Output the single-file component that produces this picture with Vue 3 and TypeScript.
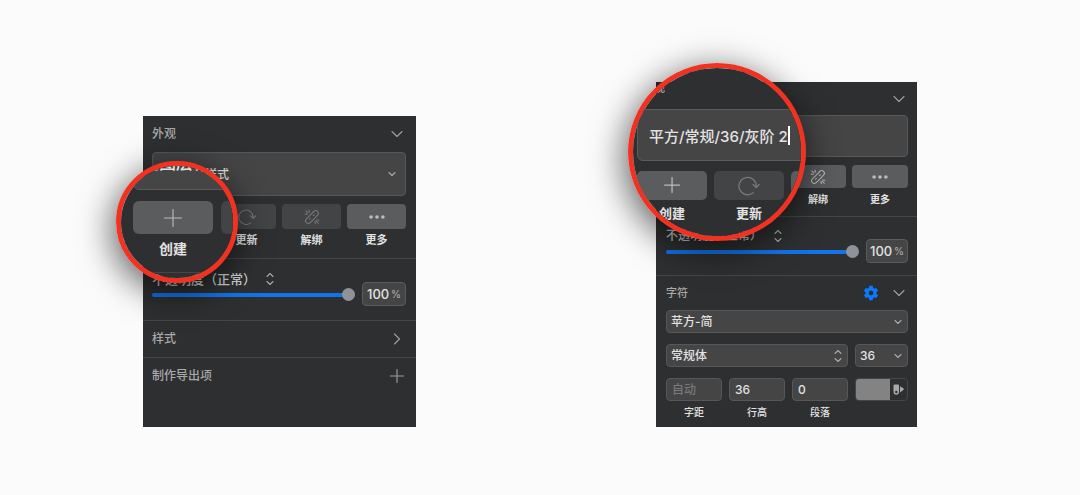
<script setup lang="ts">
import { h, ref } from 'vue'

type IconName =
  | 'chevron' | 'caret' | 'right' | 'updown' | 'plus' | 'bigPlus' | 'refresh' | 'unlink' | 'more' | 'gear' | 'swatch'

interface IconDef {
  box: string
  width: number
  height: number
  d: string
  fill?: boolean
}

const icons: Record<IconName, IconDef> = {
  chevron: { box: '0 0 12 8', width: 12, height: 8, d: 'M1 1.5 6 6.5 11 1.5' },
  caret: { box: '0 0 8 6', width: 8, height: 6, d: 'M1 1.5 4 4.5 7 1.5' },
  right: { box: '0 0 8 12', width: 8, height: 12, d: 'M1.5 1 6.5 6 1.5 11' },
  updown: { box: '0 0 8 14', width: 8, height: 14, d: 'M1 4.5 4 1.5 7 4.5M1 9.5 4 12.5 7 9.5' },
  plus: { box: '0 0 14 14', width: 14, height: 14, d: 'M7 .5V13.5M.5 7H13.5' },
  bigPlus: { box: '0 0 18 18', width: 18, height: 18, d: 'M9 .5V17.5M.5 9H17.5' },
  refresh: { box: '0 0 18 18', width: 18, height: 18, d: 'M12.6 14.8A7.2 7.2 0 1 1 15.2 9.6M12.6 7.9 15.2 10.4 17.6 7.9' },
  unlink: {
    box: '0 0 16 16', width: 16, height: 16,
    d: 'M6 6.4 9.8 2.5A2.6 2.6 0 0 1 13.6 6.2L9.8 10.1M10.2 5.9 9.6 6.5M6.2 9.5 5.6 10.1M9.6 10.3 6.2 13.7A2.6 2.6 0 0 1 2.4 9.9L6 6.4M1 5 3.2 5.4M1.9 1.9 3.9 3.9M5 1 5.4 3.2M11 12.4 11.3 14.8M12.4 12.4 14.2 14.2M12.6 11 15 11.3',
  },
  more: { box: '0 0 16 4', width: 16, height: 4, fill: true, d: 'M.3 2a1.8 1.8 0 1 0 3.6 0 1.8 1.8 0 1 0-3.6 0M6.2 2a1.8 1.8 0 1 0 3.6 0 1.8 1.8 0 1 0-3.6 0M12.1 2a1.8 1.8 0 1 0 3.6 0 1.8 1.8 0 1 0-3.6 0' },
  gear: {
    box: '0 0 24 24', width: 18, height: 18, fill: true,
    d: 'M19.14 12.94c.04-.3.06-.61.06-.94 0-.32-.02-.64-.07-.94l2.03-1.58a.49.49 0 0 0 .12-.61l-1.92-3.32a.49.49 0 0 0-.59-.22l-2.39.96c-.5-.38-1.03-.7-1.62-.94l-.36-2.54a.48.48 0 0 0-.48-.41h-3.84a.48.48 0 0 0-.47.41l-.36 2.54c-.59.24-1.13.57-1.62.94l-2.39-.96a.48.48 0 0 0-.59.22L2.74 8.87a.48.48 0 0 0 .12.61l2.03 1.58c-.05.3-.09.63-.09.94s.02.64.07.94l-2.03 1.58a.49.49 0 0 0-.12.61l1.92 3.32c.12.22.37.29.59.22l2.39-.96c.5.38 1.03.7 1.62.94l.36 2.54c.05.24.24.41.48.41h3.84c.24 0 .44-.17.47-.41l.36-2.54c.59-.24 1.13-.56 1.62-.94l2.39.96c.22.08.47 0 .59-.22l1.92-3.32a.48.48 0 0 0-.12-.61zM12 15.2a3.2 3.2 0 1 1 0-6.4 3.2 3.2 0 0 1 0 6.4',
  },
  swatch: {
    box: '0 0 12 11', width: 12, height: 11, fill: true,
    d: 'M1.5 .5H5a1 1 0 0 1 1 1V8A2.7 2.7 0 0 1 .5 8V1.5a1 1 0 0 1 1-1M2.1 8a1.2 1.2 0 1 0 2.4 0 1.2 1.2 0 1 0-2.4 0M7 2.2 10.6 4.6a.8.8 0 0 1 0 1.2L7 8.6z',
  },
}

const Icon = (props: { name: IconName; scale?: number }) => {
  const def = icons[props.name]
  const scale = props.scale ?? 1
  return h(
    'svg',
    { viewBox: def.box, width: def.width * scale, height: def.height * scale, 'aria-hidden': 'true' },
    [
      h('path', {
        d: def.d,
        fill: def.fill ? 'currentColor' : 'none',
        'fill-rule': 'evenodd',
        stroke: def.fill ? 'none' : 'currentColor',
        'stroke-width': 1.1,
        'stroke-linecap': 'round',
        'stroke-linejoin': 'round',
      }),
    ],
  )
}
Icon.props = ['name', 'scale']

interface Action {
  label: string
  icon: IconName
  off: boolean
}

const layerActions: Action[] = [
  { label: '创建', icon: 'plus', off: false },
  { label: '更新', icon: 'refresh', off: true },
  { label: '解绑', icon: 'unlink', off: true },
  { label: '更多', icon: 'more', off: false },
]
const textActions: Action[] = layerActions.map((a) => (a.icon === 'unlink' ? { ...a, off: false } : a))

const styleName = ref('平方/常规/36/灰阶 2')
const layerOpacity = ref(100)
const textOpacity = ref(100)
const metrics = [
  { id: 'kern', label: '字距', value: '', hint: '自动' },
  { id: 'line', label: '行高', value: '36', hint: '' },
  { id: 'para', label: '段落', value: '0', hint: '' },
]
</script>

<template>
  <main class="stage">
    <section class="panel layer">
      <header class="head">
        <h2>外观</h2>
        <button class="bare" aria-label="折叠外观"><Icon name="chevron" /></button>
      </header>
      <div class="inset">
        <div class="pick tall">
          <select aria-label="图层样式"><option>无图层样式</option></select>
          <Icon name="caret" />
        </div>
        <div class="actions">
          <label v-for="a in layerActions" :key="a.label">
            <button :class="{ off: a.off }"><Icon :name="a.icon" /></button>
            <span>{{ a.label }}</span>
          </label>
        </div>
      </div>
      <div class="opacity">
        <div class="level">
          <label for="layer-opacity">不透明度（正常）</label>
          <button class="bare" aria-label="混合模式"><Icon name="updown" /></button>
          <input id="layer-opacity" v-model="layerOpacity" type="range" min="0" max="100" />
        </div>
        <label class="percent"><input v-model="layerOpacity" aria-label="不透明度" /><span>%</span></label>
      </div>
      <div class="head ruled">
        <h2>样式</h2>
        <button class="bare" aria-label="展开样式"><Icon name="right" /></button>
      </div>
      <div class="head ruled">
        <h2>制作导出项</h2>
        <button class="bare" aria-label="添加导出项"><Icon name="plus" /></button>
      </div>

      <div class="lens small">
        <div class="glass">
          <div class="field">无图层样式</div>
          <div class="actions">
            <label>
              <button><Icon name="bigPlus" /></button>
              <span>创建</span>
            </label>
            <label>
              <button class="off" aria-label="更新"></button>
            </label>
          </div>
        </div>
      </div>
    </section>

    <section class="panel text">
      <header class="head">
        <h2>外观</h2>
        <button class="bare" aria-label="折叠外观"><Icon name="chevron" /></button>
      </header>
      <div class="inset">
        <div class="tall"></div>
        <div class="actions">
          <label v-for="a in textActions" :key="a.label">
            <button :class="{ off: a.off }"><Icon :name="a.icon" /></button>
            <span>{{ a.label }}</span>
          </label>
        </div>
      </div>
      <div class="opacity">
        <div class="level">
          <label for="text-opacity">不透明度（正常）</label>
          <button class="bare" aria-label="混合模式"><Icon name="updown" /></button>
          <input id="text-opacity" v-model="textOpacity" type="range" min="0" max="100" />
        </div>
        <label class="percent"><input v-model="textOpacity" aria-label="不透明度" /><span>%</span></label>
      </div>
      <div class="head ruled">
        <h2>字符</h2>
        <button class="bare gear" aria-label="字符设置"><Icon name="gear" /></button>
        <button class="bare" aria-label="折叠字符"><Icon name="chevron" /></button>
      </div>
      <div class="inset type">
        <div class="pick">
          <select aria-label="字体"><option>苹方-简</option></select>
          <Icon name="caret" />
        </div>
        <div class="row">
          <div class="pick">
            <select aria-label="字重"><option>常规体</option></select>
            <Icon name="updown" />
          </div>
          <div class="pick">
            <select aria-label="字号"><option>36</option></select>
            <Icon name="caret" />
          </div>
        </div>
        <div class="row metrics">
          <label v-for="m in metrics" :key="m.id">
            <input :value="m.value" :placeholder="m.hint" />
            <span>{{ m.label }}</span>
          </label>
          <button class="color" aria-label="文字颜色"><i></i><Icon name="swatch" /></button>
        </div>
      </div>

      <div class="lens large">
        <div class="glass">
          <h2>外观</h2>
          <label class="field">
            <input v-model="styleName" aria-label="样式名称" />
            <i class="cursor"></i>
          </label>
          <div class="actions">
            <label>
              <button><Icon name="plus" :scale="1.15" /></button>
              <span>创建</span>
            </label>
            <label>
              <button class="off"><Icon name="refresh" :scale="1.2" /></button>
              <span>更新</span>
            </label>
            <label>
              <button aria-label="解绑"></button>
            </label>
          </div>
        </div>
      </div>
    </section>
  </main>
</template>

<style>
body {
  margin: 0;
  background: #fbfbfb;
}
</style>

<style scoped>
* {
  box-sizing: border-box;
}

.stage {
  display: grid;
  grid-template-columns: 273fr 261fr;
  column-gap: 240px;
  align-items: end;
  min-height: 100vh;
  padding: 82px 163px 68px 143px;
  overflow: hidden;
  font-family: Inter, "Noto Sans CJK SC", sans-serif;
  font-size: 12px;
  color: #e2e2e3;
}

button,
input,
select {
  min-width: 0;
  margin: 0;
  padding: 0;
  border: 0;
  font: inherit;
  color: inherit;
  background: none;
  appearance: none;
  outline: 0;
}

svg {
  display: block;
  flex: none;
}

.panel {
  position: relative;
  background: #2e2f30;
}

.layer {
  --tall: 44px;
  --button: 25px;
  padding-bottom: 33px;
}

.text {
  --tall: 42px;
  --button: 23px;
  padding-bottom: 4px;
}

.head {
  display: flex;
  align-items: center;
  gap: 16px;
  height: 36px;
  padding: 0 10px 0 9px;
}

.text .head {
  height: 33px;
  padding: 0 12px 0 10px;
}

.head.ruled {
  height: 37px;
  border-top: 1px solid #454647;
}

.text .head.ruled {
  height: 35px;
}

h2 {
  flex: 1;
  margin: 0;
  font-size: 12px;
  font-weight: 500;
  line-height: 18px;
  color: #a9a9aa;
}

.text .head h2 {
  font-size: 11px;
}

.bare {
  display: grid;
  place-items: center;
  min-width: 14px;
  color: #a0a0a1;
}

.layer .bare {
  min-width: 18px;
}

.level .bare {
  color: #a9a9aa;
}

.bare.gear {
  margin-right: -5px;
  color: #0a7bff;
}

.text .head .bare {
  justify-items: end;
}

.inset {
  padding: 0 10px 0 9px;
}

.text .inset {
  padding: 0 9px 0 10px;
}

.tall {
  height: var(--tall);
  border: 1px solid #565758;
  border-radius: 4px;
  background: #454545;
}

.pick {
  position: relative;
  display: flex;
  align-items: center;
  height: 23px;
  padding-right: 5px;
  border: 1px solid #565758;
  border-radius: 4px;
  background: #454545;
  color: #a9a9aa;
}

.pick.tall {
  height: var(--tall);
  padding-right: 9px;
}

.pick select {
  flex: 1;
  height: 100%;
  padding-left: 4px;
  font-weight: 500;
  color: #e2e2e3;
}

.pick.tall select {
  padding-left: 16px;
}

.actions {
  display: grid;
  grid-template-columns: repeat(4, 1fr);
  gap: 6px;
  padding-top: 8px;
}

.layer > .inset {
  padding-bottom: 7px;
}

.text > .inset:not(.type) {
  padding-bottom: 6px;
}

.actions label {
  display: flex;
  flex-direction: column;
  font-size: 11px;
  font-weight: 600;
  line-height: 22px;
  text-align: center;
}

.text > .inset .actions label {
  font-size: 10px;
}

.actions button {
  display: grid;
  place-items: center;
  width: 100%;
  height: var(--button);
  border-radius: 4px;
  background: #5b5c5e;
  color: #bcbcbd;
}

.actions button.off {
  background: #434445;
  color: #77787a;
}

.opacity {
  display: flex;
  align-items: flex-start;
  gap: 7px;
  padding: 11px 10px 14px 9px;
  border-top: 1px solid #454647;
}

.text .opacity {
  padding: 10px 9px 12px 10px;
}

.level {
  display: grid;
  grid-template-columns: auto 1fr;
  grid-template-rows: 18px 13px;
  column-gap: 5px;
  flex: 1;
  align-items: center;
}

.text .level {
  column-gap: 9px;
}

.level label {
  font-size: 13px;
  font-weight: 500;
  line-height: 18px;
  color: #cfcfd0;
}

.text .level label {
  font-size: 12px;
}

.level .bare {
  justify-self: start;
}

.level input {
  grid-column: 1 / -1;
  width: 100%;
  height: 13px;
}

.level input::-webkit-slider-runnable-track {
  height: 4px;
  border-radius: 2px;
  background: #1273ea;
}

.level input::-webkit-slider-thumb {
  width: 13px;
  height: 13px;
  margin-top: -5px;
  border-radius: 50%;
  background: #8f9298;
  appearance: none;
}

.percent {
  display: flex;
  align-items: center;
  justify-content: center;
  width: 44px;
  height: 24px;
  margin-top: 12px;
  border: 1px solid #5a5b5c;
  border-radius: 4px;
  background: #454545;
  font-size: 13px;
  font-weight: 500;
}

.text .percent {
  width: 42px;
}

.percent input {
  width: 24px;
}

.percent span {
  font-size: 10px;
  color: #a9a9aa;
}

.type,
.row {
  display: grid;
  gap: 11px;
}

.row {
  grid-template-columns: 182fr 53fr;
  column-gap: 7px;
}

.metrics {
  grid-template-columns: 56fr 56fr 56fr 53fr;
}

.metrics label {
  display: flex;
  flex-direction: column;
  font-size: 10px;
  font-weight: 500;
  line-height: 22px;
  text-align: center;
}

.metrics input {
  width: 100%;
  height: 23px;
  padding-left: 5px;
  border: 1px solid #565758;
  border-radius: 4px;
  background: #454545;
  font-size: 12px;
}

.metrics input::placeholder {
  color: #777879;
}

.color {
  display: flex;
  align-items: center;
  height: 23px;
  border: 1px solid #454647;
  border-radius: 4px;
  overflow: hidden;
  color: #a9a9aa;
  gap: 3px;
}

.color i {
  width: 34px;
  height: 100%;
  background: #838383;
}

/* Magnifier lenses lie over the panels */
.lens {
  position: absolute;
  border: 5px solid #f03223;
  border-radius: 50%;
  box-shadow: -2px 8px 34px 2px rgba(0, 0, 0, 0.6);
}

.lens.small {
  --button: 33px;
  top: 45px;
  left: -27px;
  width: 122px;
  height: 122px;
}

.lens.large {
  --button: 29px;
  top: -19px;
  left: -28px;
  width: 178px;
  height: 178px;
}

.glass {
  display: flow-root;
  height: 100%;
  border-radius: 50%;
  overflow: hidden;
  background: #2e2f30;
}

.glass .field {
  display: flex;
  align-items: center;
  border: 1px solid #5a5b5c;
  border-radius: 6px;
  background: #454545;
  white-space: nowrap;
}

.small .glass {
  padding-left: 12px;
}

.small .field {
  width: 160px;
  height: 57px;
  margin-top: -33px;
  padding-left: 8px;
  font-size: 17px;
  font-weight: 500;
}

.small .actions {
  grid-template-columns: 80px 80px;
  gap: 8px;
  width: 168px;
  padding-top: 11px;
}

.small .actions label {
  font-size: 14px;
  line-height: 30px;
}

.small .actions button {
  border-radius: 6px;
}

.small .actions::after {
  content: "";
  grid-column: 1 / -1;
  border-top: 1px solid #454647;
}

.large .glass {
  padding-left: 4px;
}

.large h2 {
  padding: 11px 0 12px 4px;
  font-size: 12px;
}

.large .field {
  width: 200px;
  height: 52px;
  padding-left: 11px;
  font-size: 15px;
  font-weight: 500;
}

.large .field input {
  width: 141px;
}

.cursor {
  width: 2px;
  height: 19px;
  margin-left: -2px;
  background: #ffffff;
}

.large .actions {
  grid-template-columns: repeat(3, 70px);
  gap: 7px;
  padding-top: 10px;
}

.large .actions label {
  font-size: 13px;
  line-height: 26px;
}

.large .actions button {
  border-radius: 5px;
}
</style>
